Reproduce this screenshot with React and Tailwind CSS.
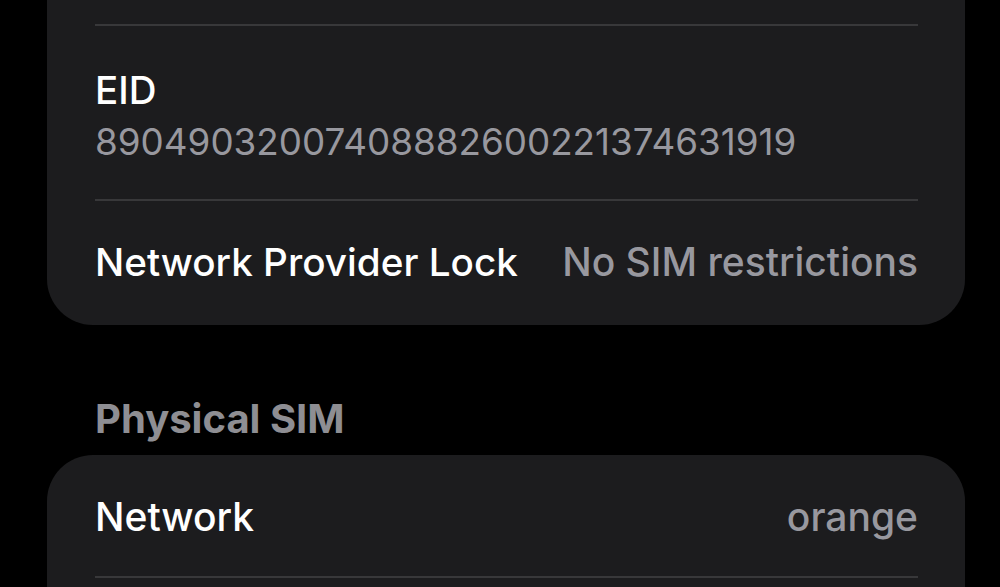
export default function App() {
  const font = { fontFamily: 'Inter, "Noto Sans", sans-serif' };
  return (
    <div className="w-[1000px] h-[587px] bg-black overflow-hidden" style={font}>
      <div className="ml-[47px] w-[918px] bg-[#1c1c1e] rounded-b-[46px]">
        <div className="h-[24px]" />
        <div className="ml-[48px] mr-[47px] h-[2px] bg-[#38383a]" />
        <div className="pl-[48px] pr-[47px] h-[173px] flex flex-col justify-center pt-[10px]">
          <div className="text-white text-[38.5px] font-medium leading-[48px]">EID</div>
          <div className="text-[#98989f] text-[36.8px] font-normal leading-[56px]">89049032007408882600221374631919</div>
        </div>
        <div className="ml-[48px] mr-[47px] h-[2px] bg-[#38383a]" />
        <div className="pl-[48px] pr-[47px] h-[124px] flex items-center justify-between pb-[2px]">
          <span className="text-white text-[38.7px] font-medium">Network Provider Lock</span>
          <span className="text-[#98989f] text-[39px] font-medium">No SIM restrictions</span>
        </div>
      </div>
      <div className="pl-[95px] pt-[67px] h-[130px] text-[#8e8e93] text-[40px] font-bold leading-[54px]">Physical SIM</div>
      <div className="ml-[47px] w-[918px] bg-[#1c1c1e] rounded-t-[46px]">
        <div className="pl-[48px] pr-[47px] h-[121px] flex items-center justify-between pt-[4px]">
          <span className="text-white text-[39px] font-medium">Network</span>
          <span className="text-[#98989f] text-[39px] font-medium">orange</span>
        </div>
        <div className="ml-[48px] mr-[47px] h-[2px] bg-[#38383a]" />
        <div className="h-[40px]" />
      </div>
    </div>
  );
}
